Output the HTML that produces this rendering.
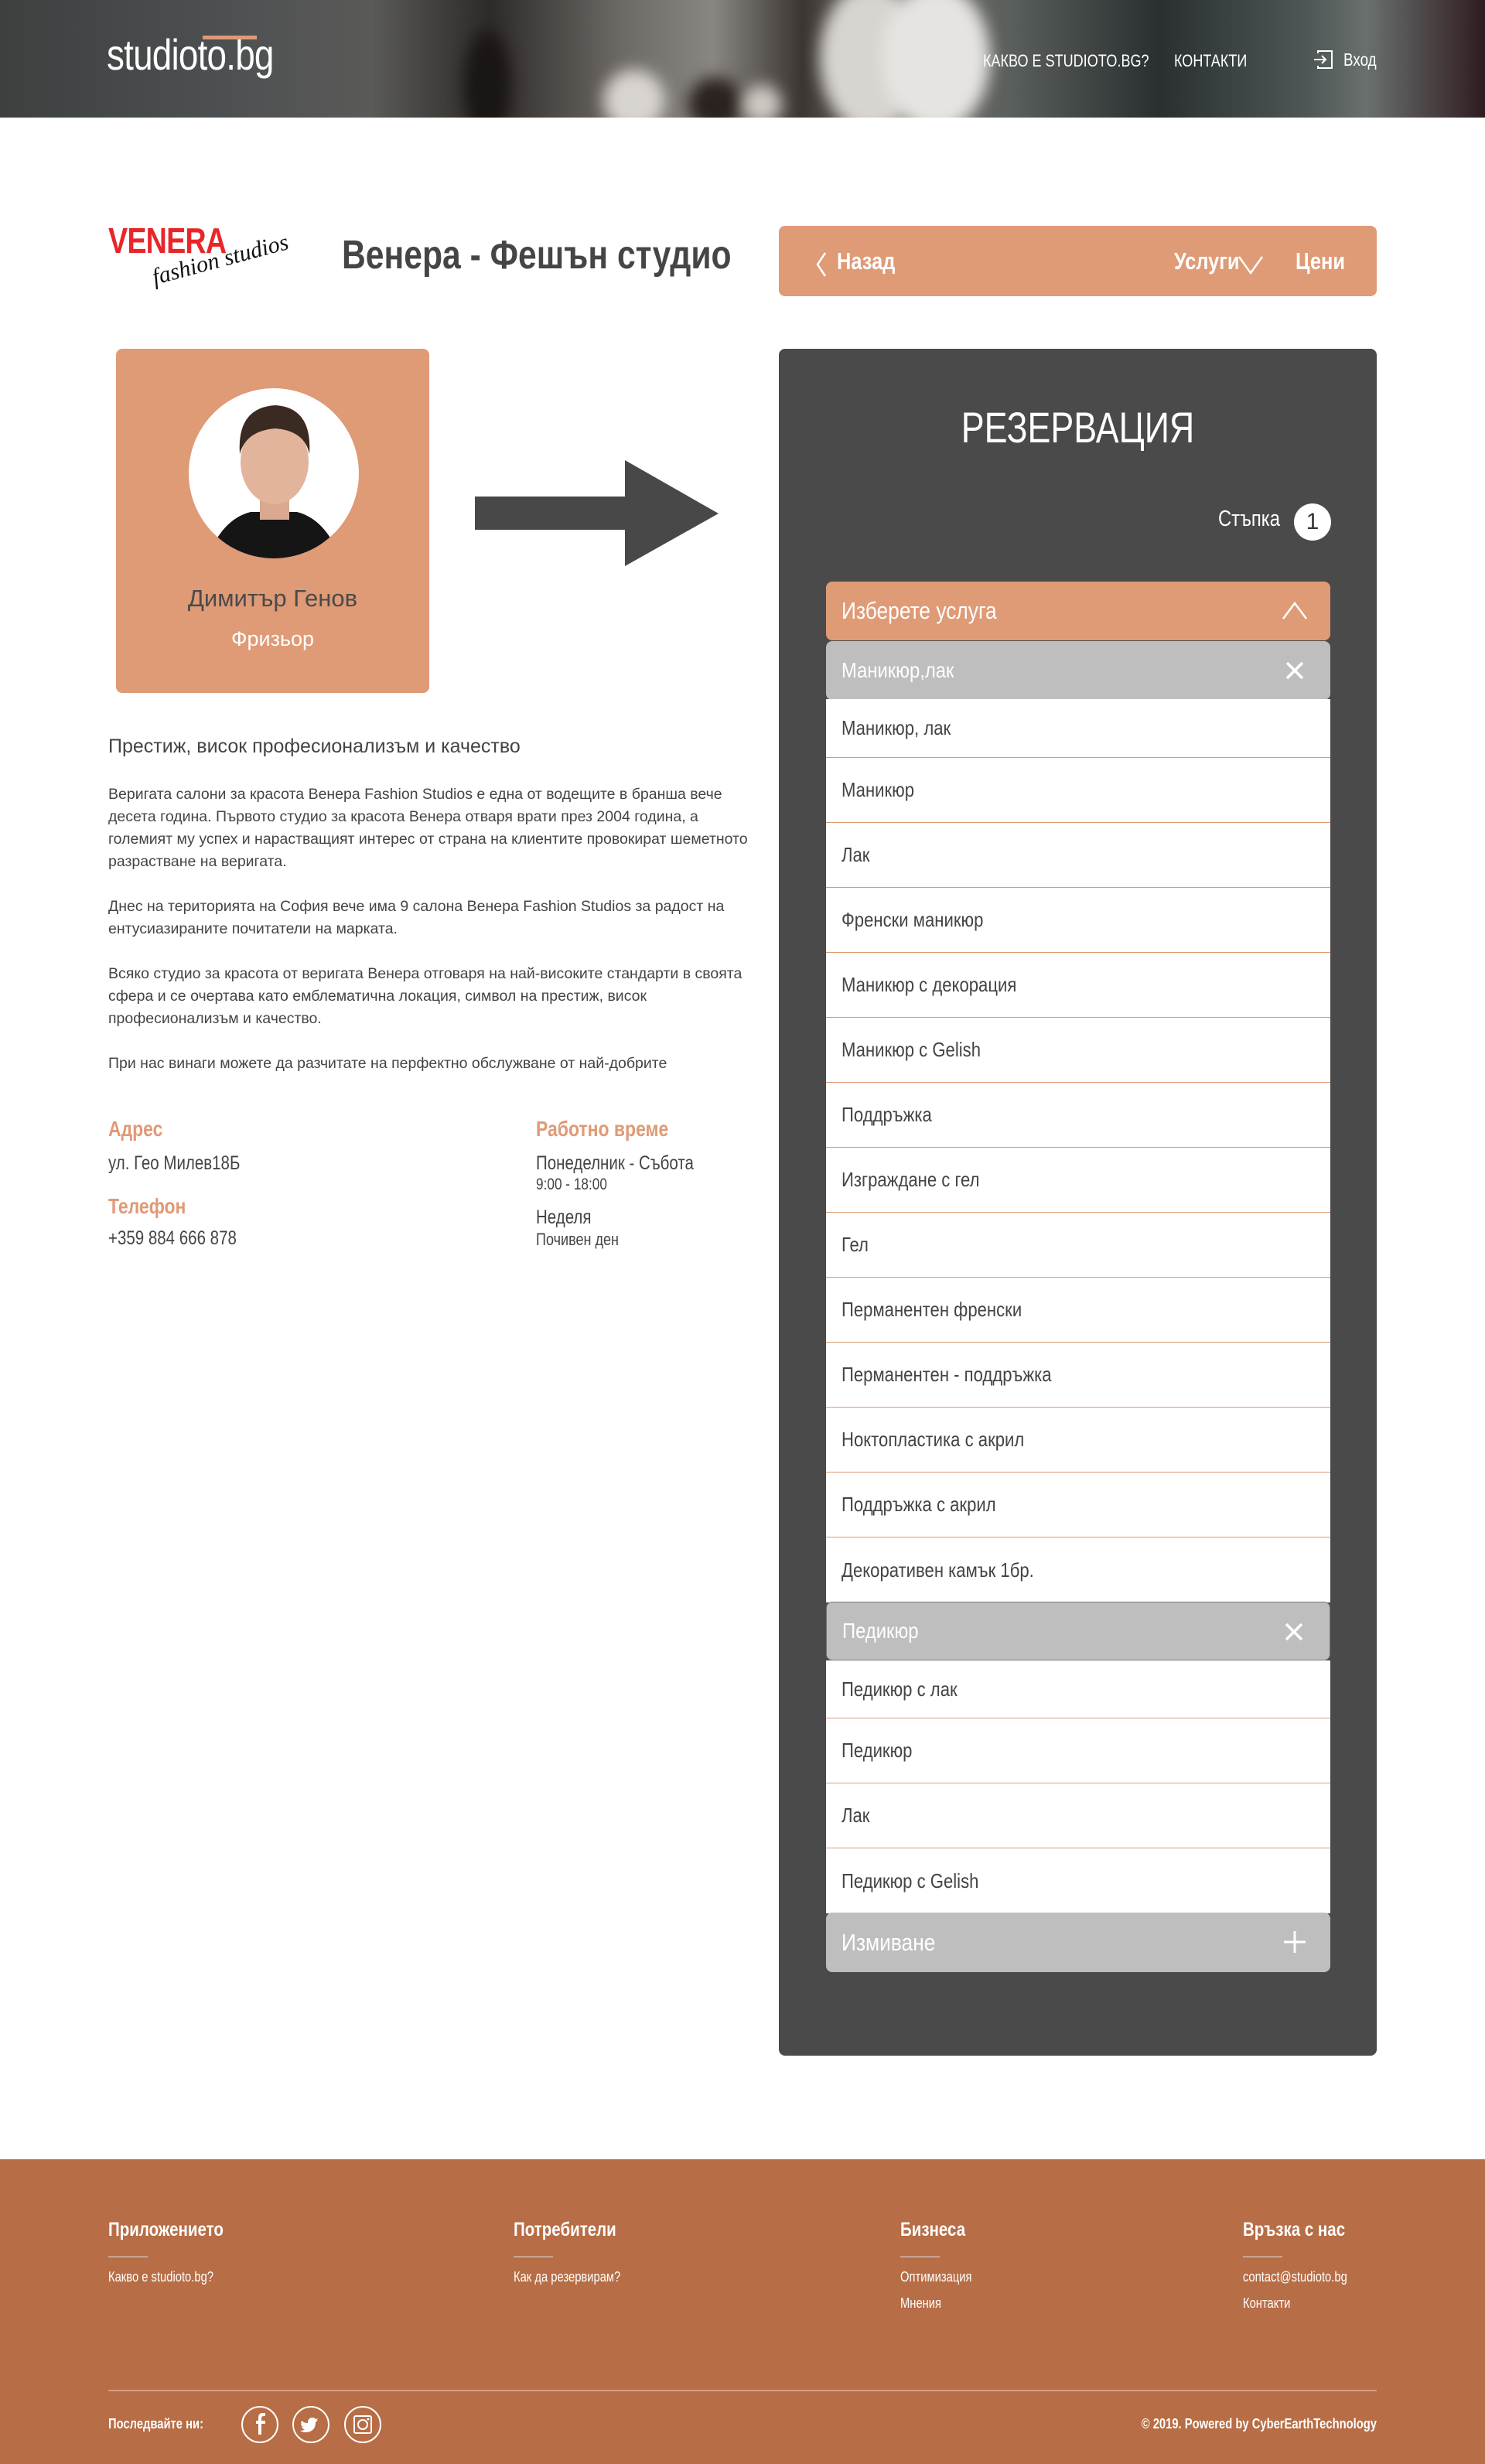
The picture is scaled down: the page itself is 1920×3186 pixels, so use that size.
<!DOCTYPE html>
<html><head><meta charset="utf-8">
<style>
*{margin:0;padding:0;box-sizing:border-box}
body{width:1920px;height:3186px;position:relative;background:#fff;font-family:"Liberation Sans Narrow","Liberation Sans",sans-serif;color:#444;overflow:hidden}
.a{position:absolute;white-space:nowrap}
.n{transform:scaleX(.82);transform-origin:left center}
.nr{transform:scaleX(.82);transform-origin:right center}
#hdr{position:absolute;left:0;top:0;width:1920px;height:152px;overflow:hidden;
background:linear-gradient(90deg,#3d403f 0%,#4d5052 15%,#5a5a57 25%,#2e2a28 33%,#6e6a66 42%,#8a8783 48%,#3b3632 54%,#7a7672 60%,#5a5f5c 68%,#2a2f30 78%,#4d5755 88%,#6a706e 92%,#2f1c20 100%)}
#hdr .blob{position:absolute;border-radius:50%;filter:blur(10px)}
.item{position:absolute;left:1068px;width:652px;background:#fff;border-bottom:1.5px solid #dd9a76;font-size:26px;color:#444;padding-left:20px;display:flex;align-items:center}
.item span,.grp span{display:inline-block;transform:scaleX(.85);transform-origin:left center}
.grp{position:absolute;left:1068px;width:652px;height:76px;background:#bebebe;border-radius:8px;color:#fff;font-size:28px;padding-left:20px;display:flex;align-items:center}
.grp .ic{position:absolute;right:28px;top:20px;width:36px;height:36px}
.p{font-family:"Liberation Sans",sans-serif;font-size:19.5px;line-height:29px;color:#444;left:140px;position:absolute;width:830px}
.f{color:#fff}
</style></head><body>
<div id="hdr">
<div class="blob" style="left:600px;top:40px;width:60px;height:140px;background:#1a1614"></div>
<div class="blob" style="left:780px;top:90px;width:80px;height:80px;background:#d8d4cf"></div>
<div class="blob" style="left:890px;top:100px;width:70px;height:70px;background:#2a221e"></div>
<div class="blob" style="left:1060px;top:-20px;width:130px;height:190px;background:#d8d5d1"></div>
<div class="blob" style="left:1140px;top:-20px;width:140px;height:190px;background:#e6e4e1"></div>
<div class="blob" style="left:960px;top:110px;width:50px;height:50px;background:#cfcac4"></div>
</div>
<div class="a n" style="left:138px;top:38px;font-size:56px;color:#fff;letter-spacing:-1px">studioto.bg</div>
<div class="a" style="left:262px;top:46px;width:70px;height:5px;background:#dd9a76"></div>
<div class="a n" style="left:1271px;top:66px;font-size:22px;color:#fff">КАКВО Е STUDIOTO.BG?</div>
<div class="a n" style="left:1518px;top:66px;font-size:22px;color:#fff">КОНТАКТИ</div>
<svg class="a" style="left:1698px;top:64px" width="28" height="26" viewBox="0 0 28 26"><path d="M6 5V2h18v22H6v-3" fill="none" stroke="#fff" stroke-width="2"/><path d="M1 13h14M11 8l5 5-5 5" fill="none" stroke="#fff" stroke-width="2"/></svg>
<div class="a n" style="left:1737px;top:64px;font-size:23px;color:#fff">Вход</div>

<div class="a n" style="left:140px;top:284px;font-size:46px;font-weight:bold;color:#e8262a;font-family:'Liberation Sans',sans-serif;letter-spacing:-1px">VENERA</div>
<div class="a" style="left:202px;top:342px;font-size:30px;font-style:italic;color:#111;font-family:'Liberation Serif',serif;transform:rotate(-15deg);transform-origin:left bottom">fashion studios</div>
<div class="a n" style="left:442px;top:300px;font-size:52px;font-weight:bold;color:#454545">Венера - Фешън студио</div>

<div class="a" style="left:1007px;top:292px;width:773px;height:91px;background:#df9a76;border-radius:8px"></div>
<svg class="a" style="left:1054px;top:325px" width="16" height="34"><path d="M13 2L3 17l10 15" fill="none" stroke="#fff" stroke-width="2.5"/></svg>
<div class="a n" style="left:1082px;top:320px;font-size:31px;color:#fff;font-weight:bold">Назад</div>
<div class="a n" style="left:1518px;top:320px;font-size:31px;color:#fff;font-weight:bold">Услуги</div>
<svg class="a" style="left:1600px;top:330px" width="34" height="26"><path d="M2 2l15 21L32 2" fill="none" stroke="#fff" stroke-width="2.5"/></svg>
<div class="a n" style="left:1675px;top:320px;font-size:31px;color:#fff;font-weight:bold">Цени</div>

<div class="a" style="left:150px;top:451px;width:405px;height:445px;background:#df9a76;border-radius:8px"></div>
<svg class="a" style="left:244px;top:502px" width="220" height="220" viewBox="0 0 220 220">
<defs><clipPath id="c"><circle cx="110" cy="110" r="110"/></clipPath></defs>
<circle cx="110" cy="110" r="110" fill="#fff"/>
<g clip-path="url(#c)">
<path d="M20 230 Q40 170 80 160 L140 160 Q180 170 200 230Z" fill="#151515"/>
<rect x="92" y="130" width="38" height="40" fill="#d9a88f"/>
<ellipse cx="111" cy="95" rx="44" ry="55" fill="#e2b49c"/>
<path d="M66 85 Q62 25 112 22 Q160 25 156 85 Q150 55 112 52 Q74 55 66 85Z" fill="#3a2a22"/>
</g></svg>
<div class="a" style="left:150px;width:405px;text-align:center;top:756px;font-size:31px;color:#4a4a4a;font-family:'Liberation Sans',sans-serif">Димитър Генов</div>
<div class="a" style="left:150px;width:405px;text-align:center;top:811px;font-size:27px;color:#fff;font-family:'Liberation Sans',sans-serif">Фризьор</div>

<div class="a" style="left:614px;top:642px;width:196px;height:43px;background:#484848"></div>
<svg class="a" style="left:808px;top:595px" width="122" height="138"><path d="M0 0L121 69L0 137Z" fill="#484848"/></svg>

<div class="a" style="left:140px;top:951px;font-size:25px;color:#444;font-family:'Liberation Sans',sans-serif">Престиж, висок професионализъм и качество</div>
<div class="p" style="top:1013px">Веригата салони за красота Венера Fashion Studios е една от водещите в бранша вече десета година. Първото студио за красота Венера отваря врати през 2004 година, а големият му успех и нарастващият интерес от страна на клиентите провокират шеметното разрастване на веригата.</div>
<div class="p" style="top:1158px">Днес на територията на София вече има 9 салона Венера Fashion Studios за радост на ентусиазираните почитатели на марката.</div>
<div class="p" style="top:1245px">Всяко студио за красота от веригата Венера отговаря на най-високите стандарти в своята сфера и се очертава като емблематична локация, символ на престиж, висок професионализъм и качество.</div>
<div class="p" style="top:1361px">При нас винаги можете да разчитате на перфектно обслужване от най-добрите</div>

<div class="a n" style="left:140px;top:1444px;font-size:28px;color:#df9a76;font-weight:bold">Адрес</div>
<div class="a n" style="left:140px;top:1490px;font-size:25px">ул. Гео Милев18Б</div>
<div class="a n" style="left:140px;top:1544px;font-size:28px;color:#df9a76;font-weight:bold">Телефон</div>
<div class="a n" style="left:140px;top:1587px;font-size:25px">+359 884 666 878</div>
<div class="a n" style="left:693px;top:1444px;font-size:28px;color:#df9a76;font-weight:bold">Работно време</div>
<div class="a n" style="left:693px;top:1490px;font-size:25px">Понеделник - Събота</div>
<div class="a n" style="left:693px;top:1520px;font-size:21px">9:00 - 18:00</div>
<div class="a n" style="left:693px;top:1560px;font-size:25px">Неделя</div>
<div class="a n" style="left:693px;top:1590px;font-size:22px">Почивен ден</div>

<div class="a" style="left:1007px;top:451px;width:773px;height:2207px;background:#4a4a4a;border-radius:8px"></div>
<div class="a" style="left:1007px;width:773px;text-align:center;top:520px;font-size:56px;color:#fff"><span style="display:inline-block;transform:scaleX(.8)">РЕЗЕРВАЦИЯ</span></div>
<div class="a n" style="left:1575px;top:655px;font-size:29px;color:#fff">Стъпка</div>
<div class="a" style="left:1673px;top:651px;width:48px;height:48px;border-radius:50%;background:#fff;color:#333;font-size:30px;text-align:center;line-height:48px">1</div>

<div class="grp" style="top:752px;background:#df9a76;font-size:31px"><span>Изберете услуга</span><svg class="ic" viewBox="0 0 36 36"><path d="M3 28L18 8l15 20" fill="none" stroke="#fff" stroke-width="2.5"/></svg></div>
<div class="grp" style="top:829px"><span>Маникюр,лак</span><svg class="ic" viewBox="0 0 36 36"><path d="M8 8l20 20M28 8L8 28" stroke="#fff" stroke-width="3.5"/></svg></div>
<div class="item" style="top:904px;height:76px"><span>Маникюр, лак</span></div>
<div class="item" style="top:980px;height:84px"><span>Маникюр</span></div>
<div class="item" style="top:1064px;height:84px"><span>Лак</span></div>
<div class="item" style="top:1148px;height:84px"><span>Френски маникюр</span></div>
<div class="item" style="top:1232px;height:84px"><span>Маникюр с декорация</span></div>
<div class="item" style="top:1316px;height:84px"><span>Маникюр с Gelish</span></div>
<div class="item" style="top:1400px;height:84px"><span>Поддръжка</span></div>
<div class="item" style="top:1484px;height:84px"><span>Изграждане с гел</span></div>
<div class="item" style="top:1568px;height:84px"><span>Гел</span></div>
<div class="item" style="top:1652px;height:84px"><span>Перманентен френски</span></div>
<div class="item" style="top:1736px;height:84px"><span>Перманентен - поддръжка</span></div>
<div class="item" style="top:1820px;height:84px"><span>Ноктопластика с акрил</span></div>
<div class="item" style="top:1904px;height:84px"><span>Поддръжка с акрил</span></div>
<div class="item" style="top:1988px;height:84px;border:none"><span>Декоративен камък 1бр.</span></div>
<div class="grp" style="top:2071px;border:1px solid #777"><span>Педикюр</span><svg class="ic" viewBox="0 0 36 36"><path d="M8 8l20 20M28 8L8 28" stroke="#fff" stroke-width="3.5"/></svg></div>
<div class="item" style="top:2147px;height:75px"><span>Педикюр с лак</span></div>
<div class="item" style="top:2222px;height:84px"><span>Педикюр</span></div>
<div class="item" style="top:2306px;height:84px"><span>Лак</span></div>
<div class="item" style="top:2390px;height:84px;border:none"><span>Педикюр с Gelish</span></div>
<div class="grp" style="top:2473px;height:77px;font-size:31px"><span>Измиване</span><svg class="ic" viewBox="0 0 36 36"><path d="M18 4v28M4 18h28" stroke="#fff" stroke-width="3"/></svg></div>

<div class="a" style="left:0;top:2792px;width:1920px;height:394px;background:#b76d45"></div>
<div class="a f n" style="left:140px;top:2869px;font-size:25px;font-weight:bold">Приложението</div>
<div class="a f n" style="left:664px;top:2869px;font-size:25px;font-weight:bold">Потребители</div>
<div class="a f n" style="left:1164px;top:2869px;font-size:25px;font-weight:bold">Бизнеса</div>
<div class="a f n" style="left:1607px;top:2869px;font-size:25px;font-weight:bold">Връзка с нас</div>
<div class="a" style="left:140px;top:2917px;width:51px;height:2px;background:#c9a393"></div>
<div class="a" style="left:664px;top:2917px;width:51px;height:2px;background:#c9a393"></div>
<div class="a" style="left:1164px;top:2917px;width:51px;height:2px;background:#c9a393"></div>
<div class="a" style="left:1607px;top:2917px;width:51px;height:2px;background:#c9a393"></div>
<div class="a f n" style="left:140px;top:2934px;font-size:18px">Какво е studioto.bg?</div>
<div class="a f n" style="left:664px;top:2934px;font-size:18px">Как да резервирам?</div>
<div class="a f n" style="left:1164px;top:2934px;font-size:18px">Оптимизация</div>
<div class="a f n" style="left:1164px;top:2968px;font-size:18px">Мнения</div>
<div class="a f n" style="left:1607px;top:2934px;font-size:18px">contact@studioto.bg</div>
<div class="a f n" style="left:1607px;top:2968px;font-size:18px">Контакти</div>
<div class="a" style="left:140px;top:3090px;width:1640px;height:2px;background:#cfa18c"></div>
<div class="a f n" style="left:140px;top:3124px;font-size:18px;font-weight:bold">Последвайте ни:</div>
<svg class="a" style="left:310px;top:3110px" width="185" height="50" viewBox="0 0 185 50">
<g fill="none" stroke="#fff" stroke-width="2"><circle cx="26" cy="25" r="23"/><circle cx="92" cy="25" r="23"/><circle cx="159" cy="25" r="23"/>
<rect x="148" y="14" width="22" height="22" rx="2"/><circle cx="159" cy="25" r="6"/></g>
<circle cx="166" cy="18" r="1.5" fill="#fff"/>
<path d="M28 38V24h5v-4h-5v-3q0-3 3-3h2v-4h-3q-6 0-6 6v4h-3v4h3v14z" fill="#fff"/>
<path d="M80 20q3 3 8 3q0-7 6-7q3 0 4 2l3-1-2 3 2-1q-1 2-3 3q0 12-12 13q-5 0-8-2q4 0 6-2q-3 0-4-3h2q-3-1-3-4l2 1q-3-2-1-5z" fill="#fff"/>
</svg>
<div class="a f nr" style="left:1380px;width:400px;text-align:right;top:3124px;font-size:18px;font-weight:bold">© 2019. Powered by CyberEarthTechnology</div>
</body></html>
